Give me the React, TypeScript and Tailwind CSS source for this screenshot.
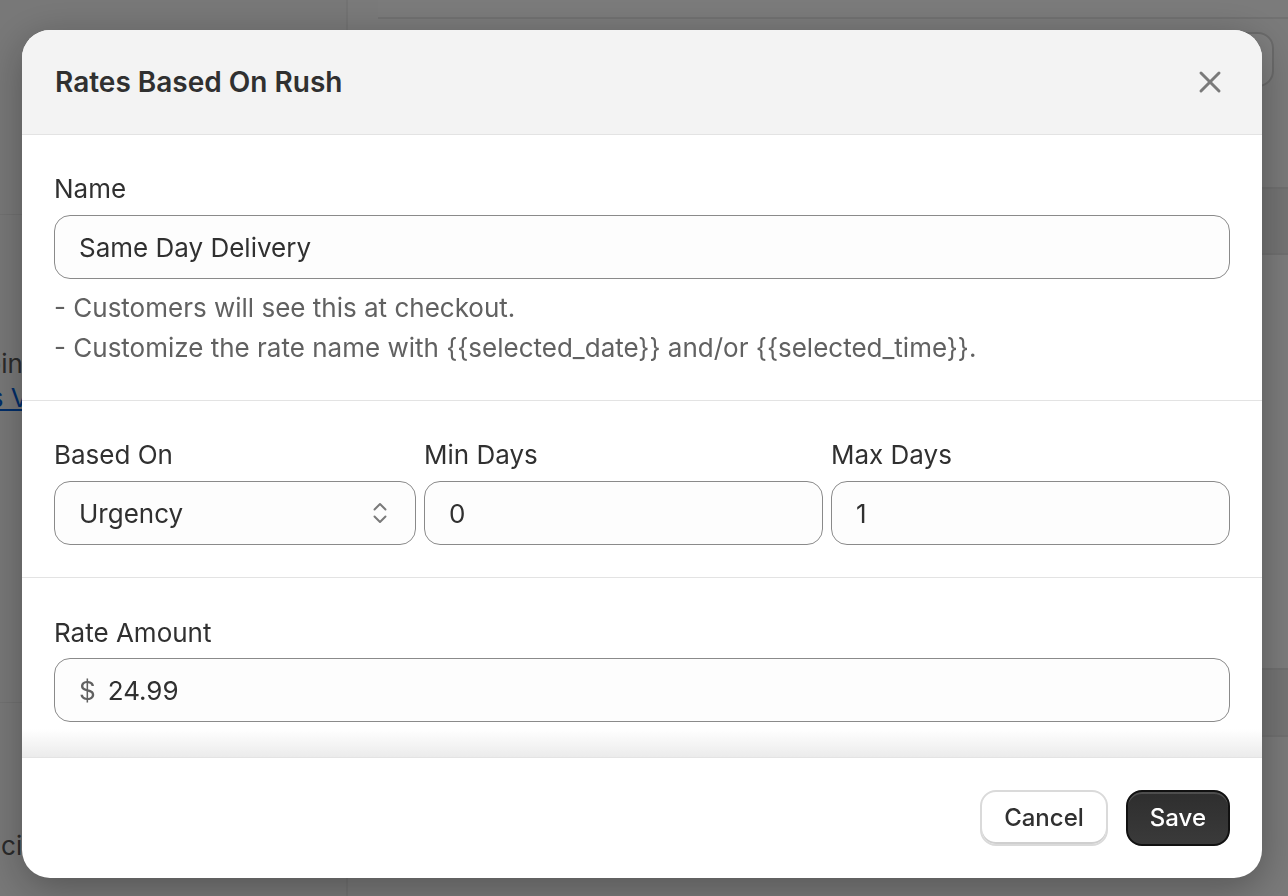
import React from 'react';
import { X } from 'lucide-react';

const SelectIcon = () => (
  <svg width="16" height="24" viewBox="0 0 16 24" fill="none" stroke="#7a7a7a" strokeWidth="2" strokeLinecap="round" strokeLinejoin="round">
    <path d="M2.5 8.5 8 3l5.5 5.5" />
    <path d="M2.5 15.5 8 21l5.5-5.5" />
  </svg>
);

const Field = ({ label, gap = 'mb-[6px]', children }: { label: string; gap?: string; children: React.ReactNode }) => (
  <div className="flex flex-col">
    <label className={'text-[26px] leading-[40px] text-[#303030] ' + gap}>{label}</label>
    {children}
  </div>
);

const inputBox =
  'flex h-16 items-center rounded-2xl border border-[#8a8a8a] bg-[#fdfdfd] px-6 text-[26px] text-[#303030]';

const App = () => {
  return (
    <div className="relative h-[896px] w-full overflow-hidden bg-[#f4f4f4] font-[Inter,sans-serif]">
      {/* page underneath */}
      <div className="flex h-full">
        <aside className="w-[348px] shrink-0 border-r-2 border-[#e6e6e6] bg-[#f1f1f1] text-[26px]">
          <div className="h-[215px] border-b border-[#e3e3e3]" />
          <div className="h-[488px] border-b border-[#e3e3e3] pt-[132px] leading-[34px]">
            <div className="-ml-[69px] text-[#555]">Shipping rules</div>
            <a className="-ml-[96px] block text-[#005bd3] underline">Settings View</a>
          </div>
          <div className="pt-[127px] leading-[32px]">
            <div className="-ml-[32px] text-[#555]">Pricing</div>
          </div>
        </aside>
        <main className="flex-1 pl-[30px]">
          <div className="h-[19px] border-b-2 border-[#e2e2e2] bg-[#f7f7f7]" />
          <div className="flex justify-end pr-[14px] pt-[13px]">
            <div className="h-[55px] w-[120px] rounded-2xl border-2 border-[#d6d6d6] bg-white" />
          </div>
          <div className="mt-[100px] h-[68px] border-y-2 border-[#e0e0e0] bg-[#e8e8e8]" />
          <div className="h-[413px] bg-[#f8f8f8]" />
          <div className="h-[69px] border-y-2 border-[#e0e0e0] bg-[#e8e8e8]" />
        </main>
      </div>

      {/* backdrop + modal */}
      <div className="fixed inset-0 flex items-start bg-black/50 pl-[22px] pt-[30px]">
        <div className="flex h-[848px] w-[1240px] flex-col overflow-hidden rounded-[28px] bg-white shadow-[0_10px_40px_rgba(0,0,0,0.3)]">
          <div className="flex h-[105px] shrink-0 items-center justify-between border-b border-[#e3e3e3] bg-[#f3f3f3] pl-[33px] pr-[34px]">
            <h2 className="text-[28px] font-semibold text-[#303030]">Rates Based On Rush</h2>
            <button className="flex h-9 w-9 items-center justify-center text-[#7a7a7a]">
              <X size={36} strokeWidth={2} />
            </button>
          </div>

          <div className="flex flex-1 flex-col">
            <div className="border-b border-[#e3e3e3] px-8 pb-8 pt-[34px]">
              <Field label="Name">
                <div className={inputBox}>Same Day Delivery</div>
              </Field>
              <div className="mt-[9px] text-[26px] leading-[40px] text-[#616161]">
                <p>- Customers will see this at checkout.</p>
                <p>- Customize the rate name with {'{{selected_date}}'} and/or {'{{selected_time}}'}.</p>
              </div>
            </div>

            <div className="grid grid-cols-[362px_1fr_1fr] gap-2 border-b border-[#e3e3e3] px-8 pb-8 pt-[34px]">
              <Field label="Based On">
                <div className={inputBox + ' justify-between pr-[27px]'}>
                  <span>Urgency</span>
                  <SelectIcon />
                </div>
              </Field>
              <Field label="Min Days">
                <div className={inputBox}>0</div>
              </Field>
              <Field label="Max Days">
                <div className={inputBox}>1</div>
              </Field>
            </div>

            <div className="px-8 pt-[35px]">
              <Field label="Rate Amount" gap="mb-[5px]">
                <div className={inputBox + ' gap-3'}>
                  <span className="text-[#616161]">$</span>
                  <span>24.99</span>
                </div>
              </Field>
            </div>
            <div className="flex-1 bg-linear-to-b from-white from-20% to-[#ebebeb]" />
          </div>

          <div className="flex shrink-0 justify-end gap-[18px] border-t border-[#e3e3e3] px-8 py-8">
            <button className="h-14 rounded-2xl border-2 border-[#dadada] bg-white px-[22px] text-[24px] font-medium text-[#303030] shadow-[inset_0_-2px_0_0_#cfcfcf]">
              Cancel
            </button>
            <button className="h-14 rounded-2xl border-2 border-[#111] bg-linear-to-b from-[#2e2e2e] to-[#3a3a3a] px-[22px] text-[24px] font-medium text-white shadow-[inset_0_2px_0_0_rgba(255,255,255,0.15)]">
              Save
            </button>
          </div>
        </div>
      </div>
    </div>
  );
};

export default App;
